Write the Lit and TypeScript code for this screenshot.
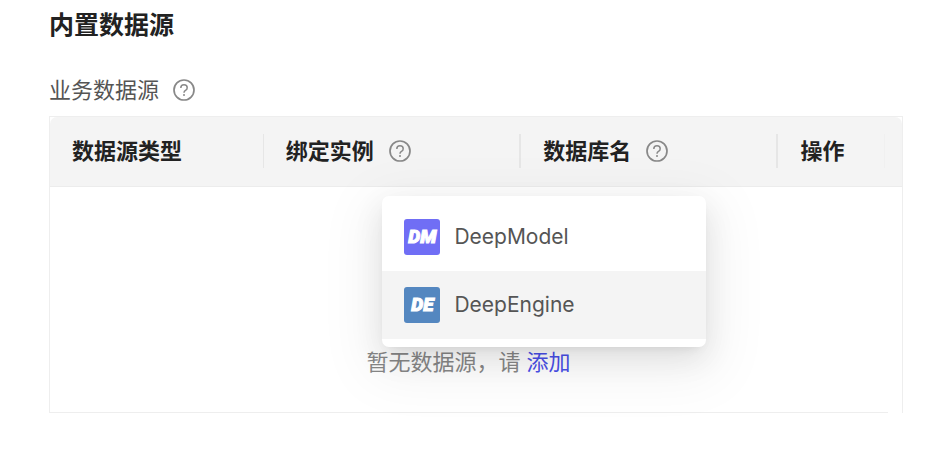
import { LitElement, html, css } from "lit";
import { customElement, property } from "lit/decorators.js";

@customElement("help-tip")
class HelpTip extends LitElement {
  @property() label = "";

  static styles = css`
    :host {
      display: inline-flex;
    }
    .help {
      display: flex;
      padding: 0;
      border: 0;
      background: none;
      color: #888;
      cursor: pointer;
    }
    .glyph {
      display: block;
      width: 22px;
      height: 22px;
    }
  `;

  render() {
    return html`
      <button class="help" type="button" aria-label=${this.label}>
        <svg class="glyph" viewBox="0 0 22 22" fill="none" stroke="currentColor" aria-hidden="true">
          <circle cx="11" cy="11" r="10" stroke-width="1.7" />
          <path
            d="M7.8 8.9C7.8 7 9.1 5.8 11 5.8C12.9 5.8 14.2 7 14.2 8.7C14.2 10 13.5 10.8 12.5 11.4C11.5 12 11 12.4 11 13.7"
            stroke-width="1.5"
          />
          <circle cx="11" cy="16" r="1" fill="currentColor" stroke="none" />
        </svg>
      </button>
    `;
  }
}

@customElement("app-root")
class AppRoot extends LitElement {
  private columns = [
    { title: "数据源类型", help: false, cls: "type" },
    { title: "绑定实例", help: true, cls: "instance" },
    { title: "数据库名", help: true, cls: "database" },
    { title: "操作", help: false, cls: "action" },
  ];

  private options = [
    { name: "DeepModel", short: "DM", cls: "model", active: false },
    { name: "DeepEngine", short: "DE", cls: "engine", active: true },
  ];

  static styles = css`
    :host {
      display: block;
      font-family: "Inter", "Noto Sans CJK SC", sans-serif;
      font-size: 22px;
      line-height: 32px;
      color: #555;
      background: #fff;
    }
    .page {
      padding: 8px 33px 40px 49px;
    }
    .heading {
      margin: 0;
      font-size: 25px;
      font-weight: 700;
      line-height: 34px;
      color: #222;
    }
    .label {
      display: flex;
      align-items: center;
      gap: 14px;
      margin: 32px 0 10px;
    }
    .frame {
      border: 1px solid #eee;
      border-bottom: 0;
    }
    .table {
      width: 100%;
      table-layout: fixed;
      border-collapse: separate;
      border-spacing: 0;
    }
    .type {
      width: 25.1%;
    }
    .instance,
    .database {
      width: 30.2%;
    }
    .action {
      width: 12.5%;
    }
    .head {
      padding: 17px 0 18px;
      background: #f4f4f4;
      border-bottom: 1px solid #ececec;
      text-align: left;
      font-weight: 700;
      color: #222;
    }
    .head:first-child {
      border-top-left-radius: 7px;
    }
    .head:last-child {
      border-top-right-radius: 7px;
    }
    .title {
      display: flex;
      align-items: center;
      gap: 15px;
      height: 34px;
      padding-left: 22px;
      line-height: 34px;
      border-right: 2px solid #e6e6e6;
    }
    .type .title {
      border-right-width: 1px;
    }
    .action .title {
      border-right: 1px solid #f0f0f0;
    }
    .body {
      padding: 159px 15px 34px 0;
      text-align: center;
      color: #888;
    }
    .empty {
      position: relative;
      display: inline-block;
    }
    .add {
      color: #4a50ea;
      text-decoration: none;
    }
    .rule {
      height: 1px;
      margin-right: 14px;
      background: #eee;
    }
    .menu {
      position: absolute;
      left: 16px;
      bottom: 31px;
      box-sizing: border-box;
      width: 324px;
      margin: 0;
      padding: 7px 0 8px;
      list-style: none;
      overflow: hidden;
      border-radius: 7px;
      background: #fff;
      text-align: left;
      box-shadow:
        0 5px 11px -7px rgba(0, 0, 0, 0.14),
        0 11px 30px rgba(0, 0, 0, 0.09),
        0 16px 54px 16px rgba(0, 0, 0, 0.05);
    }
    .option {
      display: flex;
      align-items: center;
      gap: 14px;
      width: 100%;
      height: 68px;
      padding: 0 22px;
      border: 0;
      background: none;
      font: inherit;
      font-size: 21px;
      color: #555;
      cursor: pointer;
    }
    .option.active {
      background: #f4f4f4;
    }
    .badge {
      width: 36px;
      height: 36px;
      border-radius: 3px;
      font-family: "Roboto", sans-serif;
      font-size: 19px;
      font-style: italic;
      font-weight: 900;
      line-height: 36px;
      text-align: center;
      color: #fff;
      -webkit-text-stroke: 1px #fff;
    }
    .badge.model {
      background: #706ef5;
    }
    .badge.engine {
      background: #5487c0;
    }
  `;

  render() {
    return html`
      <main class="page">
        <h1 class="heading">内置数据源</h1>
        <div class="label">
          <span>业务数据源</span>
          <help-tip label="业务数据源"></help-tip>
        </div>
        <div class="frame">
          <table class="table" aria-label="业务数据源">
            <thead>
              <tr>
                ${this.columns.map(
                  (c) => html`
                    <th class="head ${c.cls}" scope="col">
                      <div class="title">
                        <span>${c.title}</span>
                        ${c.help ? html`<help-tip label=${c.title}></help-tip>` : null}
                      </div>
                    </th>
                  `,
                )}
                <td class="head"></td>
              </tr>
            </thead>
            <tbody>
              <tr>
                <td class="body" colspan="5">
                  <div class="empty">
                    暂无数据源，请 <a class="add" href="#add">添加</a>
                    <ul class="menu">
                      ${this.options.map(
                        (o) => html`
                          <li>
                            <button class="option ${o.active ? "active" : ""}" type="button">
                              <span class="badge ${o.cls}">${o.short}</span>
                              <span>${o.name}</span>
                            </button>
                          </li>
                        `,
                      )}
                    </ul>
                  </div>
                </td>
              </tr>
            </tbody>
          </table>
          <div class="rule"></div>
        </div>
      </main>
    `;
  }
}
